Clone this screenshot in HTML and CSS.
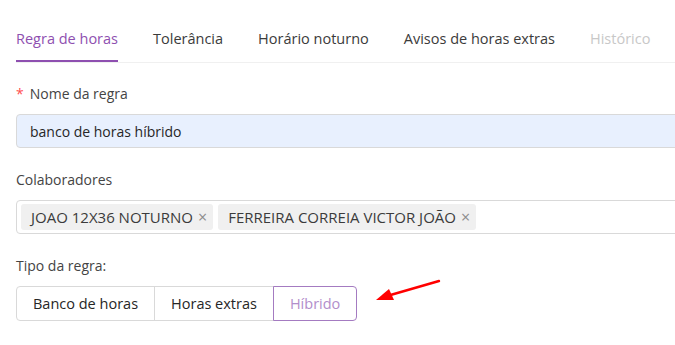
FILE: index.html
```html
<!DOCTYPE html>
<html lang="pt-BR">

<head>
    <meta charset="UTF-8">
    <meta name="viewport" content="width=device-width, initial-scale=1.0">
    <title>Regra de horas</title>
    <link rel="stylesheet" href="styles.css">
</head>

<body>
    <div class="page">
        <div class="tabs">
            <span class="tab active">Regra de horas</span>
            <span class="tab">Tolerância</span>
            <span class="tab">Horário noturno</span>
            <span class="tab">Avisos de horas extras</span>
            <span class="tab disabled">Histórico</span>
        </div>

        <div class="field">
            <label class="label"><span class="required">*</span>Nome da regra</label>
            <div class="input filled">banco de horas híbrido</div>
        </div>

        <div class="field">
            <label class="label">Colaboradores</label>
            <div class="input select">
                <span class="tag">JOAO 12X36 NOTURNO <span class="close">&times;</span></span>
                <span class="tag">FERREIRA CORREIA VICTOR JOÃO <span class="close">&times;</span></span>
            </div>
        </div>

        <div class="field">
            <label class="label">Tipo da regra:</label>
            <div class="radio-row">
                <div class="radio-group">
                    <span class="radio-button">Banco de horas</span>
                    <span class="radio-button">Horas extras</span>
                    <span class="radio-button checked">Híbrido</span>
                </div>
                <svg class="arrow" width="70" height="30" viewBox="0 0 70 30">
                    <line x1="66" y1="3" x2="14" y2="18" stroke="#f00" stroke-width="2.4" stroke-linecap="round"/>
                    <polygon points="3,22 16,11 21,22" fill="#f00"/>
                </svg>
            </div>
        </div>
    </div>
</body>

</html>
```

FILE: styles.css
```css
body {
    margin: 0;
    padding: 0;
    font-family: "Open Sans", "Liberation Sans", sans-serif;
    font-size: 14px;
    color: rgba(0, 0, 0, 0.85);
    background: #fff;
    overflow: hidden;
}

.page {
    padding-left: 16px;
    width: 700px;
}

.tabs {
    display: flex;
    border-bottom: 1px solid #f0f0f0;
}

.tab {
    padding: 28px 0 10px;
    line-height: 22px;
    margin-right: 35px;
    font-size: 14.5px;
    color: #3b3b3b;
    border-bottom: 2px solid transparent;
}

.tab.active {
    color: #8e4fb0;
    border-bottom-color: #8e4fb0;
}

.tab.disabled {
    color: #c8c8c8;
}

.field {
    margin-top: 20px;
}

.field + .field {
    margin-top: 21px;
}

.label {
    display: block;
    line-height: 22px;
    color: #444;
    margin-bottom: 9px;
}

.required {
    color: #ff4d4f;
    margin-right: 6px;
}

.input {
    height: 34px;
    box-sizing: border-box;
    border: 1px solid #d9d9d9;
    border-radius: 4px;
    display: flex;
    align-items: center;
    padding: 0 13px;
    color: #262626;
}

.input.filled {
    background: #e8f0fe;
}

.select {
    padding: 0 4px;
    gap: 5px;
}

.tag {
    display: inline-flex;
    align-items: center;
    height: 26px;
    padding: 0 6px 0 10px;
    background: #f0f0f0;
    border-radius: 3px;
    color: #3b3b3b;
    font-size: 15px;
    white-space: nowrap;
}

.close {
    color: #8c8c8c;
    margin-left: 5px;
    font-size: 16px;
}

.radio-row {
    display: flex;
    align-items: flex-start;
}

.radio-group {
    display: flex;
}

.radio-button {
    height: 35px;
    box-sizing: border-box;
    line-height: 33px;
    padding: 0 16px;
    border: 1px solid #d9d9d9;
    margin-left: -1px;
    font-size: 14.5px;
    color: #262626;
}

.radio-button:first-child {
    margin-left: 0;
    border-radius: 4px 0 0 4px;
}

.radio-button:last-child {
    border-radius: 0 4px 4px 0;
}

.radio-button.checked {
    border-color: #a47bc1;
    color: #b28ecb;
    position: relative;
}

.arrow {
    margin-left: 16px;
    margin-top: -8px;
}
```
